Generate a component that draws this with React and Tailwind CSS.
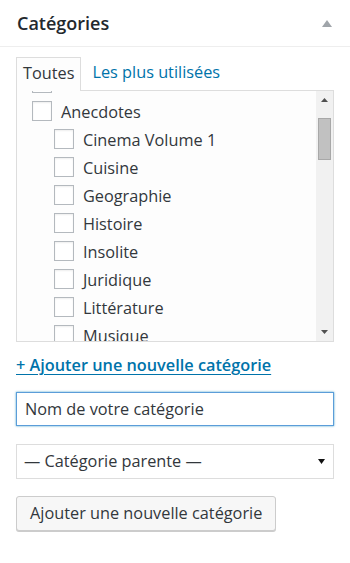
const PARENT = "Anecdotes";
const CHILDREN = [
  "Cinema Volume 1",
  "Cuisine",
  "Geographie",
  "Histoire",
  "Insolite",
  "Juridique",
  "Littérature",
  "Musique",
  "Politique",
];

function Box() {
  return (
    <span className="w-[20px] h-[20px] shrink-0 border border-[#b4b9be] bg-white shadow-[inset_0_1px_2px_rgba(0,0,0,0.07)]" />
  );
}

function Row({ label, child }) {
  return (
    <div className={`flex items-center h-[28px] gap-[9px] ${child ? "pl-[22px]" : ""}`}>
      <Box />
      <span className="text-[16.3px] leading-none text-[#32373c] pt-[2px]">{label}</span>
    </div>
  );
}

export default function App() {
  return (
    <div className="w-[350px] h-[563px] bg-white text-[#32373c] font-['Open_Sans',sans-serif]">
      {/* header */}
      <div className="flex items-center justify-between h-[47px] pl-[17px] pr-[18px] border-b border-[#eee]">
        <h2 className="text-[18px] font-semibold text-[#23282d] leading-none pb-[1px]">Catégories</h2>
        <svg width="10" height="7" viewBox="0 0 10 7">
          <path d="M5 0 L10 7 L0 7 Z" fill="#a0a5aa" />
        </svg>
      </div>

      <div className="px-[16px] pt-[10px]">
        {/* tabs */}
        <div className="flex items-end h-[33px]">
          <div className="relative z-10 -mb-px h-[34px] px-[6px] pb-[2px] flex items-center border border-b-0 border-[#ddd] bg-[#fdfdfd] text-[16.3px] text-[#32373c]">
            Toutes
          </div>
          <div className="h-[34px] pb-[2px] flex items-center ml-[11px] text-[16.3px] text-[#0073aa]">
            Les plus utilisées
          </div>
        </div>

        {/* panel */}
        <div className="flex h-[252px] border border-[#ddd] bg-[#fdfdfd]">
          <div className="flex-1 overflow-hidden pl-[15px]">
            <div className="-mt-[22px]">
              <Row label="Actualité" />
              <Row label={PARENT} />
              {CHILDREN.map((c) => (
                <Row key={c} label={c} child />
              ))}
            </div>
          </div>
          <div className="w-[17px] bg-[#f1f1f1] flex flex-col items-center">
            <svg className="mt-[7px]" width="7" height="4" viewBox="0 0 7 4">
              <path d="M3.5 0 L7 4 L0 4 Z" fill="#505050" />
            </svg>
            <div className="mt-[16px] w-[13px] h-[42px] bg-[#c1c1c1] border border-[#a8a8a8]" />
            <div className="flex-1" />
            <svg className="mb-[7px]" width="7" height="4" viewBox="0 0 7 4">
              <path d="M0 0 L7 0 L3.5 4 Z" fill="#505050" />
            </svg>
          </div>
        </div>

        {/* add link */}
        <div className="mt-[11px] h-[24px] flex items-center">
          <a className="text-[16.3px] font-semibold text-[#0073aa] underline underline-offset-[3px]">
            + Ajouter une nouvelle catégorie
          </a>
        </div>

        {/* name input */}
        <input
          defaultValue="Nom de votre catégorie"
          className="mt-[15px] block w-full h-[34px] px-[8px] border border-[#5b9dd9] shadow-[0_0_2px_rgba(30,140,190,0.8)] text-[16.3px] text-[#32373c] outline-none bg-white"
        />

        {/* parent select */}
        <div className="mt-[18px] flex items-center justify-between h-[35px] pl-[7px] pr-[8px] border border-[#ddd] bg-white text-[16.3px] text-[#32373c]">
          <span>— Catégorie parente —</span>
          <svg width="7" height="5" viewBox="0 0 7 5">
            <path d="M0 0 L7 0 L3.5 5 Z" fill="#111" />
          </svg>
        </div>

        {/* submit */}
        <button className="mt-[17px] h-[35px] px-[13px] border border-[#ccc] rounded-[3px] bg-[#f7f7f7] shadow-[0_1px_0_#ccc] text-[16.3px] text-[#32373c]">
          Ajouter une nouvelle catégorie
        </button>
      </div>
    </div>
  );
}
